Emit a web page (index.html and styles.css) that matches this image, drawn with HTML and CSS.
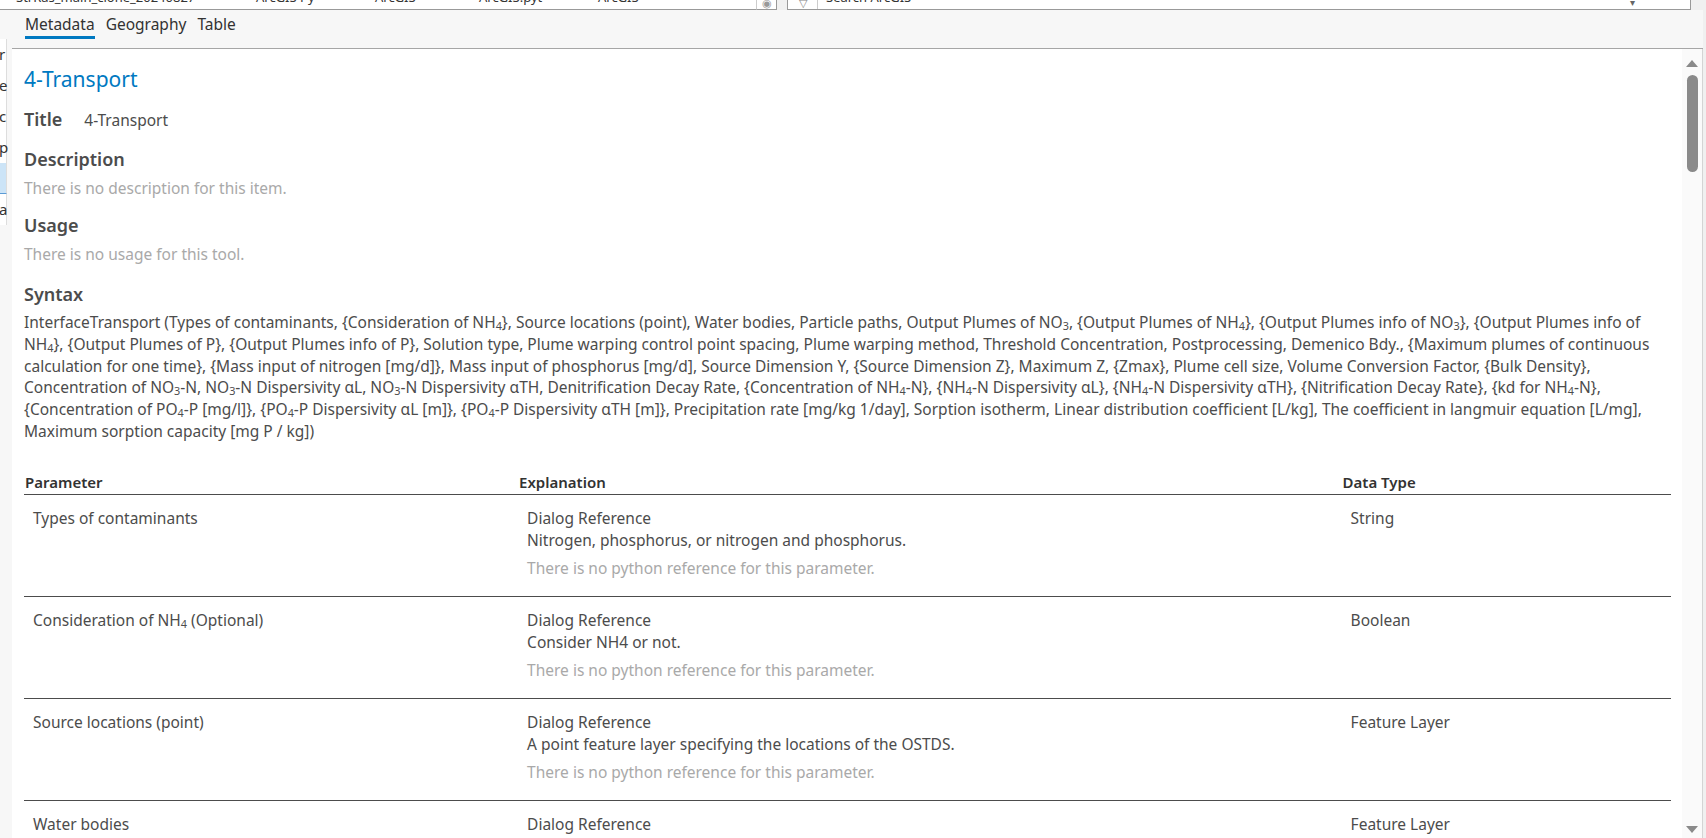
FILE: index.html
```html
<!DOCTYPE html>
<html lang="en">
<head>
    <meta charset="UTF-8">
    <title>4-Transport - Metadata</title>
    <link rel="stylesheet" href="styles.css">
</head>
<body>
    <div class="toolbar">
        <div class="toolbar-grid">
            <span class="cell cell-name">StrRas_main_clone_20240827</span>
            <span class="cell cell-a">ArcGIS Py</span>
            <span class="cell cell-b">ArcGIS</span>
            <span class="cell cell-c">ArcGIS.pyt</span>
            <span class="cell cell-d">ArcGIS</span>
        </div>
        <div class="tool-btn">&#9673;</div>
        <div class="search">
            <span class="search-filter">&#9661;</span>
            <span class="search-text">Search ArcGIS</span>
            <span class="search-drop">&#9662;</span>
        </div>
    </div>

    <div class="workspace">
        <div class="sidebar">
            <div class="side-item">r</div>
            <div class="side-item">e</div>
            <div class="side-item">c</div>
            <div class="side-item">p</div>
            <div class="side-item selected"></div>
            <div class="side-item">a</div>
        </div>

        <div class="pane">
            <div class="tabs">
                <span class="tab active">Metadata</span>
                <span class="tab">Geography</span>
                <span class="tab">Table</span>
            </div>

            <div class="view">
                <div class="doc">
                    <h1 class="doc-title">4-Transport</h1>

                    <div class="title-row">
                        <span class="label">Title</span>
                        <span class="title-value">4-Transport</span>
                    </div>

                    <h3>Description</h3>
                    <p class="empty">There is no description for this item.</p>

                    <h3>Usage</h3>
                    <p class="empty">There is no usage for this tool.</p>

                    <h3 class="syntax-head">Syntax</h3>
                    <p class="syntax">InterfaceTransport (Types of contaminants, {Consideration of NH<sub>4</sub>}, Source locations (point), Water bodies, Particle paths, Output Plumes of NO<sub>3</sub>, {Output Plumes of NH<sub>4</sub>}, {Output Plumes info of NO<sub>3</sub>}, {Output Plumes info of NH<sub>4</sub>}, {Output Plumes of P}, {Output Plumes info of P}, Solution type, Plume warping control point spacing, Plume warping method, Threshold Concentration, Postprocessing, Demenico Bdy., {Maximum plumes of continuous calculation for one time}, {Mass input of nitrogen [mg/d]}, Mass input of phosphorus [mg/d], Source Dimension Y, {Source Dimension Z}, Maximum Z, {Zmax}, Plume cell size, Volume Conversion Factor, {Bulk Density}, Concentration of NO<sub>3</sub>-N, NO<sub>3</sub>-N Dispersivity &alpha;L, NO<sub>3</sub>-N Dispersivity &alpha;TH, Denitrification Decay Rate, {Concentration of NH<sub>4</sub>-N}, {NH<sub>4</sub>-N Dispersivity &alpha;L}, {NH<sub>4</sub>-N Dispersivity &alpha;TH}, {Nitrification Decay Rate}, {kd for NH<sub>4</sub>-N}, {Concentration of PO<sub>4</sub>-P [mg/l]}, {PO<sub>4</sub>-P Dispersivity &alpha;L [m]}, {PO<sub>4</sub>-P Dispersivity &alpha;TH [m]}, Precipitation rate [mg/kg 1/day], Sorption isotherm, Linear distribution coefficient [L/kg], The coefficient in langmuir equation [L/mg], Maximum sorption capacity [mg P / kg])</p>

                    <table class="params">
                        <colgroup>
                            <col class="col-param">
                            <col class="col-expl">
                            <col class="col-type">
                        </colgroup>
                        <thead>
                            <tr>
                                <th>Parameter</th>
                                <th>Explanation</th>
                                <th>Data Type</th>
                            </tr>
                        </thead>
                        <tbody>
                            <tr>
                                <td>Types of contaminants</td>
                                <td>
                                    <div>Dialog Reference</div>
                                    <div>Nitrogen, phosphorus, or nitrogen and phosphorus.</div>
                                    <div class="note">There is no python reference for this parameter.</div>
                                </td>
                                <td>String</td>
                            </tr>
                            <tr>
                                <td>Consideration of NH<sub>4</sub> (Optional)</td>
                                <td>
                                    <div>Dialog Reference</div>
                                    <div>Consider NH4 or not.</div>
                                    <div class="note">There is no python reference for this parameter.</div>
                                </td>
                                <td>Boolean</td>
                            </tr>
                            <tr>
                                <td>Source locations (point)</td>
                                <td>
                                    <div>Dialog Reference</div>
                                    <div>A point feature layer specifying the locations of the OSTDS.</div>
                                    <div class="note">There is no python reference for this parameter.</div>
                                </td>
                                <td>Feature Layer</td>
                            </tr>
                            <tr>
                                <td>Water bodies</td>
                                <td>
                                    <div>Dialog Reference</div>
                                    <div>A polygon feature layer of the water bodies.</div>
                                    <div class="note">There is no python reference for this parameter.</div>
                                </td>
                                <td>Feature Layer</td>
                            </tr>
                        </tbody>
                    </table>
                </div>

                <div class="scrollbar">
                    <svg class="arrow" width="12" height="7" viewBox="0 0 12 7"><path d="M6 0L12 7H0Z" fill="#8a8a8a"/></svg>
                    <div class="thumb"></div>
                    <svg class="arrow arrow-down" width="12" height="7" viewBox="0 0 12 7"><path d="M0 0H12L6 7Z" fill="#8a8a8a"/></svg>
                </div>
            </div>
        </div>
    </div>
</body>
</html>
```

FILE: styles.css
```css
* {
    box-sizing: border-box;
}

/* the metadata window is a fixed 838px tall panel */
body {
    margin: 0;
    height: 838px;
    font-family: "Noto Sans", "Open Sans", sans-serif;
    color: #4c4c4c;
    background-color: #f0f0f0;
    display: grid;
    grid-template-rows: 10px 828px;
    overflow: hidden;
}

/* clipped toolbar strip at the very top */
.toolbar {
    display: flex;
    background-color: #f0f0f0;
    overflow: hidden;
    font-size: 13px;
    color: #333;
}
.toolbar-grid {
    width: 757px;
    display: flex;
    background-color: #fff;
    border-bottom: 1px solid #999;
    border-right: 1px solid #ccc;
}
.cell {
    display: block;
    margin-top: -10px;
    line-height: 15px;
    white-space: nowrap;
}
.cell-name { width: 256px; padding-left: 16px; }
.cell-a { width: 119px; }
.cell-b { width: 104px; }
.cell-c { width: 119px; }
.cell-d { width: 100px; }

.tool-btn {
    width: 20px;
    background-color: #fff;
    border-bottom: 1px solid #999;
    border-right: 1px solid #999;
    color: #999;
    font-size: 11px;
    text-align: center;
    line-height: 6px;
}
.search {
    flex: 1;
    margin-left: 10px;
    margin-right: 15px;
    display: flex;
    background-color: #fff;
    border: 1px solid #999;
    border-top: none;
}
.search-filter {
    width: 30px;
    border-right: 1px solid #ccc;
    text-align: center;
    color: #888;
    font-size: 11px;
    line-height: 6px;
}
.search-text {
    flex: 1;
    padding-left: 8px;
    margin-top: -10px;
    line-height: 15px;
}
.search-drop {
    width: 60px;
    color: #666;
    font-size: 10px;
    line-height: 4px;
}

.workspace {
    height: 828px;
    display: grid;
    grid-template-columns: 12px minmax(0, 1fr);
    overflow: hidden;
}

/* narrow strip of the catalog pane on the left */
.sidebar {
    padding-top: 29px;
    background-color: #f7f7f7;
    font-size: 15px;
    color: #333;
    overflow: hidden;
}
.side-item {
    width: 7px;
    height: 31px;
    line-height: 31px;
    border-right: 1px solid #ddd;
    background-color: #fff;
    text-indent: -1px;
}
.side-item.selected {
    background-color: #cce4f7;
    border-bottom: 1px solid #5b9bd5;
}

.pane {
    height: 828px;
    display: grid;
    grid-template-rows: 39px 789px;
    overflow: hidden;
}

.tabs {
    display: flex;
    gap: 11px;
    padding-left: 13px;
    background-color: #f7f7f7;
    border-bottom: 1px solid #a6a6a6;
    margin-right: 3px;
}
.tab {
    font-size: 15.5px;
    line-height: 23px;
    padding-top: 3px;
    color: #323232;
    border-bottom: 3px solid transparent;
    align-self: flex-start;
}
.tab.active {
    border-bottom-color: #0079c1;
}

.view {
    height: 789px;
    display: grid;
    grid-template-columns: minmax(0, 1fr) 21px;
    overflow: hidden;
    margin-right: 3px;
}

.doc {
    overflow: hidden;
    background-color: #fff;
    padding: 14px 11px 0 12px;
}

.doc-title {
    margin: 0;
    font-size: 21px;
    font-weight: 400;
    line-height: 32px;
    color: #0079c1;
}

.title-row {
    display: flex;
    align-items: baseline;
    gap: 22px;
    margin-top: 11px;
    line-height: 26px;
}
.label {
    font-size: 18px;
    font-weight: 600;
}
.title-value {
    font-size: 15.5px;
}

h3 {
    margin: 14px 0 6px;
    font-size: 18px;
    font-weight: 600;
    line-height: 24px;
}
.syntax-head {
    margin-top: 17px;
}

p {
    margin: 0;
    font-size: 15.5px;
    line-height: 22px;
}
.empty {
    color: #a9a9a9;
}

.syntax {
    font-size: 15.5px;
    line-height: 21.8px;
    margin-top: 6px;
}

sub {
    font-size: 0.7em;
    line-height: 0;
    vertical-align: -0.2em;
}

.params {
    width: 100%;
    margin-top: 28px;
    border-collapse: collapse;
    font-size: 15.5px;
    line-height: 22px;
}
.col-param { width: 30%; }
.col-expl { width: 50%; }
.col-type { width: 20%; }

.params th {
    text-align: left;
    font-weight: 600;
    font-size: 15px;
    color: #323232;
    padding: 0 0 1px 1px;
    border-bottom: 1px solid #4c4c4c;
}
.params td {
    vertical-align: top;
    padding: 12px 8px 17px 9px;
    border-bottom: 1px solid #4c4c4c;
}
.params .note {
    margin-top: 6px;
    color: #a9a9a9;
}

/* vertical scrollbar of the document view */
.scrollbar {
    height: 789px;
    display: flex;
    flex-direction: column;
    align-items: center;
    background-color: #fafafa;
    border-right: 1px solid #d4d4d4;
    padding: 11px 0 5px;
}
.arrow {
    display: block;
    flex: none;
}
.arrow-down {
    margin-top: auto;
}
.thumb {
    width: 11px;
    height: 97px;
    margin-top: 8px;
    border-radius: 6px;
    background-color: #8a8a8a;
}
```
